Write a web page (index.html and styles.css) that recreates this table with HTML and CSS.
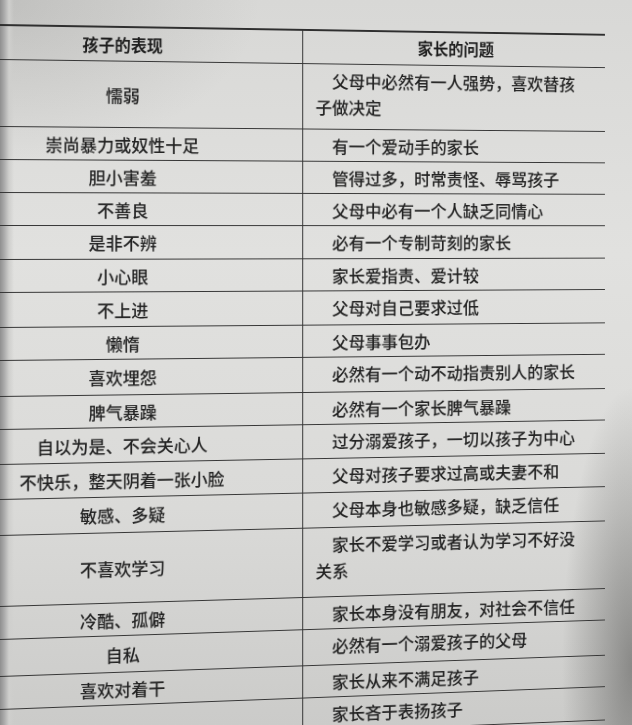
FILE: index.html
```html
<!DOCTYPE html>
<html lang="zh-CN">
<head>
<meta charset="utf-8">
<title>孩子的表现与家长的问题</title>
<link rel="stylesheet" href="styles.css">
</head>
<body>
<main class="page">
  <section class="sheet">
    <div class="cell head left">孩子的表现</div>
    <div class="cell head right">家长的问题</div>

    <div class="cell left">懦弱</div>
    <div class="cell right">父母中必然有一人强势，喜欢替孩<br>子做决定</div>

    <div class="cell left">崇尚暴力或奴性十足</div>
    <div class="cell right">有一个爱动手的家长</div>

    <div class="cell left">胆小害羞</div>
    <div class="cell right">管得过多，时常责怪、辱骂孩子</div>

    <div class="cell left">不善良</div>
    <div class="cell right">父母中必有一个人缺乏同情心</div>

    <div class="cell left">是非不辨</div>
    <div class="cell right">必有一个专制苛刻的家长</div>

    <div class="cell left">小心眼</div>
    <div class="cell right">家长爱指责、爱计较</div>

    <div class="cell left">不上进</div>
    <div class="cell right">父母对自己要求过低</div>

    <div class="cell left">懒惰</div>
    <div class="cell right">父母事事包办</div>

    <div class="cell left">喜欢埋怨</div>
    <div class="cell right">必然有一个动不动指责别人的家长</div>

    <div class="cell left">脾气暴躁</div>
    <div class="cell right">必然有一个家长脾气暴躁</div>

    <div class="cell left">自以为是、不会关心人</div>
    <div class="cell right">过分溺爱孩子，一切以孩子为中心</div>

    <div class="cell left">不快乐，整天阴着一张小脸</div>
    <div class="cell right">父母对孩子要求过高或夫妻不和</div>

    <div class="cell left">敏感、多疑</div>
    <div class="cell right">父母本身也敏感多疑，缺乏信任</div>

    <div class="cell left">不喜欢学习</div>
    <div class="cell right">家长不爱学习或者认为学习不好没<br>关系</div>

    <div class="cell left">冷酷、孤僻</div>
    <div class="cell right">家长本身没有朋友，对社会不信任</div>

    <div class="cell left">自私</div>
    <div class="cell right">必然有一个溺爱孩子的父母</div>

    <div class="cell left">喜欢对着干</div>
    <div class="cell right">家长从来不满足孩子</div>

    <div class="cell left"></div>
    <div class="cell right">家长吝于表扬孩子</div>
  </section>
</main>
</body>
</html>
```

FILE: styles.css
```css
html, body {
  margin: 0;
  padding: 0;
}

body {
  width: 632px;
  height: 725px;
  overflow: hidden;
  font-family: "Noto Sans CJK SC", "Noto Sans", sans-serif;
  color: #222;
  background:
    linear-gradient(to right, #8f8f8f 0, #a9a9a9 4px, #cfcfcd 9px, rgba(220,220,218,0) 14px),
    radial-gradient(ellipse 70px 280px at 100% 92%, rgba(80,80,78,0.55), rgba(80,80,78,0) 100%),
    radial-gradient(ellipse 260px 160px at 0 0, rgba(120,120,118,0.25), rgba(120,120,118,0) 100%),
    linear-gradient(to bottom, #d8d8d6 0, #e1e1df 35%, #dadad8 70%, #cbcbc9 100%);
}

.page {
  padding-top: 24px;
}

.sheet {
  margin-left: -62px;
  width: 700px;
  display: grid;
  grid-template-columns: 373px 327px;
  grid-template-rows: 34px 67px 33px 33px 33px 34px 33px 35px 33px 36px 33px 35px 35px 36px 71px 33px 37px 33px 35px;
  border-top: 2px solid #2f2f2f;
  transform-origin: 62px 206px;
  transform: perspective(1200px) rotateY(5.4deg);
  filter: blur(0.25px);
}

.cell {
  box-sizing: border-box;
  border-bottom: 1.5px solid #363636;
  font-size: 17.5px;
  font-weight: 500;
  display: flex;
  align-items: center;
}

.left {
  justify-content: center;
  text-align: center;
  white-space: nowrap;
}

.right {
  border-left: 1.5px solid #2f2f2f;
  padding-left: 13px;
  padding-right: 8px;
  line-height: 27px;
  white-space: nowrap;
}

.right:not(.head) {
  display: block;
  padding-top: 3px;
  text-indent: 1em;
  line-height: 27px;
}

.head {
  font-weight: 700;
  font-size: 16.5px;
  color: #1e1e1e;
  justify-content: center;
}

.right.head {
  padding-left: 0;
  padding-right: 0;
}
```
